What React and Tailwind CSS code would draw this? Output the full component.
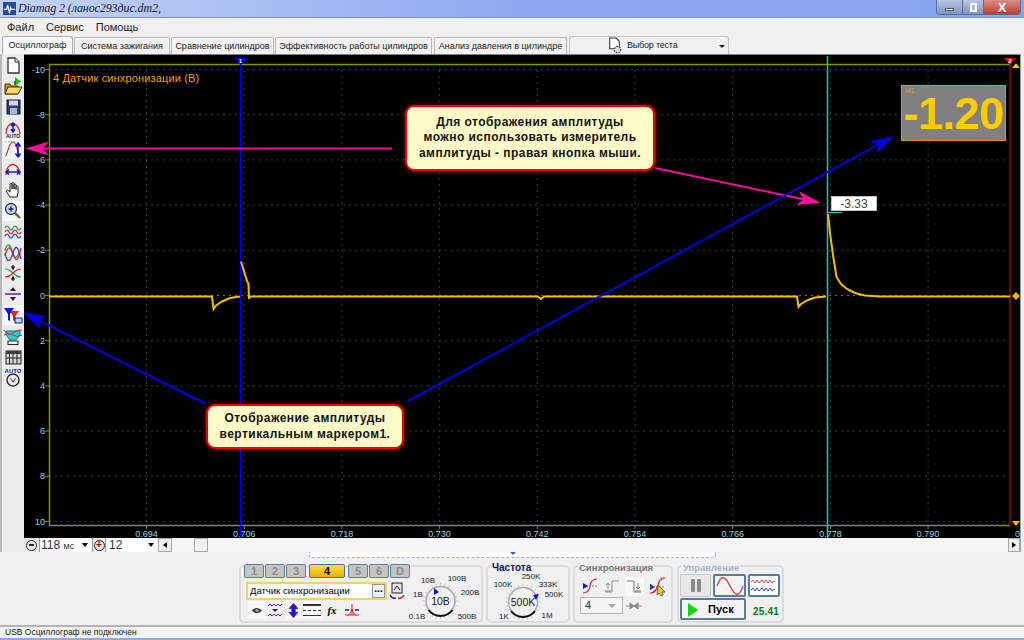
const sans = "font-['Liberation_Sans',Arial,sans-serif]"

const tabs = [
  ['Система зажигания', 'w-[96px]'],
  ['Сравнение цилиндров', 'w-[103px]'],
  ['Эффективность работы цилиндров', 'w-[157px]'],
  ['Анализ давления в цилиндре', 'w-[133px] ml-[2px]'],
]

const yLabels = [-10, -8, -6, -4, -2, 0, 2, 4, 6, 8, 10]
const xLabels = ['0.694', '0.706', '0.718', '0.730', '0.742', '0.754', '0.766', '0.778', '0.790']

function yPos(v) {
  return 295.5 + v * 22.6
}

function xPos(i) {
  return 146.5 + i * 97.7
}

// straight arrow with a barbed head
function Arrow({ from, to, color, width = 2 }) {
  const dx = to[0] - from[0]
  const dy = to[1] - from[1]
  const len = Math.hypot(dx, dy)
  const ux = dx / len
  const uy = dy / len
  const back = (d, s) => `${to[0] - ux * d - uy * s},${to[1] - uy * d + ux * s}`
  return (
    <g>
      <line x1={from[0]} y1={from[1]} x2={to[0] - ux * 12} y2={to[1] - uy * 12} stroke={color} strokeWidth={width} />
      <polygon points={`${to[0]},${to[1]} ${back(24, 7)} ${back(18, 0)} ${back(24, -7)}`} fill={color} />
    </g>
  )
}

function Scope() {
  return (
    <svg viewBox="24 55 996 483" className="absolute inset-0 w-full h-full">
      <rect x="24" y="55" width="996" height="483" fill="#000" />
      {yLabels.map(v => (
        <g key={v}>
          <line x1="49" x2="1010" y1={yPos(v)} y2={yPos(v)} stroke={v === 0 ? '#8a7a10' : '#3d3d3d'} strokeDasharray="2 4" />
          <line x1="45" x2="49" y1={yPos(v)} y2={yPos(v)} stroke="#6f8f00" />
          <text x="45" y={yPos(v) + 3} textAnchor="end" fontSize="9" fill="#8fd6e6" fontFamily="Liberation Sans">{v}</text>
        </g>
      ))}
      {xLabels.map((l, i) => (
        <g key={l}>
          <line x1={xPos(i)} x2={xPos(i)} y1="64" y2="526" stroke="#3d3d3d" strokeDasharray="2 4" />
          <line x1={xPos(i)} x2={xPos(i)} y1="526" y2="529" stroke="#777" />
          <text x={xPos(i)} y="537" textAnchor="middle" fontSize="9" fill="#8fd6e6" fontFamily="Liberation Sans">{l}</text>
        </g>
      ))}
      <text x="1015" y="537" fontSize="9" fill="#8fd6e6" fontFamily="Liberation Sans">0</text>
      <path d="M49.5 526V64.5H1010M49 525.5H1010" fill="none" stroke="#789a00" strokeWidth="1.5" />

      <line x1="240.5" x2="240.5" y1="58" y2="538" stroke="#0000f0" strokeWidth="1.5" />
      <polygon points="234,58 247,58 240.5,65" fill="#0000f0" />
      <text x="240.5" y="62.5" textAnchor="middle" fontSize="6" fontWeight="700" fill="#fff" fontFamily="Liberation Sans">1</text>
      <line x1="827.5" x2="827.5" y1="56" y2="538" stroke="#18c8c8" strokeWidth="1.5" />
      <path d="M827.5 228V212.5H842" fill="none" stroke="#18d0d0" />
      <line x1="1010" x2="1010" y1="60" y2="526" stroke="#a00000" strokeWidth="1.5" />
      <polygon points="1004,58 1016,58 1010,65" fill="#f00000" />
      <text x="1010" y="62.5" textAnchor="middle" fontSize="6" fontWeight="700" fill="#fff" fontFamily="Liberation Sans">2</text>
      <polygon points="1016,63 1020,68 1012,68" fill="#f0c000" />
      <polygon points="1012,521 1020,521 1016,526" fill="#f0c000" />
      <polygon points="1016,292 1020,296 1016,300 1012,296" fill="#f0b000" />

      <path
        d="M49 296.5H212L213.5 309L216 305.5L222 301.5L230 298L240 296.5M241 261.5L243 268L247 281L248.5 284L249 299L250 296.5H538L541 299L544 296.5H797L798.5 307L801 304L808 300L815 297.5L826 296.5M828 214L830 233L833 255L836.5 277L841 284L847 289L855 293L865 295.5L880 296.5H1010"
        fill="none"
        stroke="#f0c000"
        strokeWidth="2"
      />

      <Arrow from={[392, 148.5]} to={[25, 148.5]} color="#f0109a" />
      <Arrow from={[655, 168]} to={[821, 203]} color="#f0109a" />
      <Arrow from={[408, 401]} to={[894, 136]} color="#0000e0" />
      <Arrow from={[206, 404]} to={[22, 312]} color="#0000e0" />
    </svg>
  )
}

function Callout({ className, children }) {
  return (
    <div className={`absolute bg-[#fdfcc8] border-2 border-[#f00000] rounded-[9px] shadow-[0_0_5px_#a00000] flex items-center justify-center text-center font-bold text-[12px] leading-[15.5px] tracking-[0.45px] text-[#111] ${className}`}>
      <div>{children}</div>
    </div>
  )
}

function DocIcon() {
  return (
    <svg viewBox="0 0 20 20" className="w-5 h-5">
      <path d="M5 3h7l4 4v11H5z" fill="#fff" stroke="#333" strokeWidth="1.3" />
      <path d="M12 3v4h4" fill="#e8e8e8" stroke="#333" />
    </svg>
  )
}

function OpenIcon() {
  return (
    <svg viewBox="0 0 20 20" className="w-5 h-5">
      <path d="M2 8h5l1 2h7v8H2z" fill="#c89018" stroke="#4a3408" />
      <path d="M2 18l3-7h14l-4 7z" fill="#f8d868" stroke="#4a3408" />
      <path d="M12 1l6 4.5L12 10z" fill="#20c020" />
      <path d="M12 5v4" stroke="#107010" strokeWidth="1.5" />
    </svg>
  )
}

function SaveIcon() {
  return (
    <svg viewBox="0 0 20 20" className="w-5 h-5">
      <rect x="4" y="3" width="13" height="14" fill="#2c3e6e" stroke="#101830" />
      <rect x="6" y="3.5" width="9" height="5" fill="#d0d8e8" />
      <rect x="7" y="11" width="7" height="6" fill="#b0b8c8" />
    </svg>
  )
}

function EnvIcon({ variant }) {
  return (
    <svg viewBox="0 0 20 20" className="w-5 h-5">
      {variant === 'vert' ? (
        <>
          <path d="M2 17C5 17 5 3 10 3s4 14 7 14" fill="none" stroke="#e02020" strokeWidth="1.2" />
          <path d="M2 3h12" stroke="#909090" strokeDasharray="1.5 1.5" />
          <path d="M15 5v12M12.5 7.5L15 4l2.5 3.5M12.5 14.5L15 18l2.5-3.5" fill="none" stroke="#1010d0" strokeWidth="1.5" />
        </>
      ) : (
        <path d="M3 16C3 2 16 2 17 16" fill="none" stroke="#e02020" strokeWidth="1.3" />
      )}
      {variant === 'auto' && (
        <>
          <path d="M10 6v7M8 8l2-3 2 3M8 11l2 3 2-3" fill="none" stroke="#1010d0" strokeWidth="1.4" />
          <text x="10" y="20" textAnchor="middle" fontSize="5" fontWeight="700" fill="#222" fontFamily="Liberation Sans">AUTO</text>
        </>
      )}
      {variant === 'horiz' && (
        <path d="M3 13h14M6 10.5L3 13l3 2.5M14 10.5l3 2.5-3 2.5" fill="none" stroke="#1010e0" strokeWidth="1.6" />
      )}
    </svg>
  )
}

function HandIcon() {
  return (
    <svg viewBox="0 0 20 20" className="w-5 h-5">
      <path d="M7 17L3 11l1.5-1L7 12V4.5a1 1 0 012 0V9V3.5a1 1 0 012 0V9V5a1 1 0 012 0v4.5V7a1 1 0 012 0v6l-1 4z" fill="#fff" stroke="#222" strokeWidth="1" />
    </svg>
  )
}

function ZoomIcon() {
  return (
    <svg viewBox="0 0 20 20" className="w-5 h-5">
      <circle cx="8" cy="8" r="5.5" fill="#c8d8f0" stroke="#334" strokeWidth="1.3" />
      <path d="M5.5 8h5M8 5.5v5" stroke="#1020a0" strokeWidth="1.5" />
      <path d="M12 12l5 5" stroke="#806020" strokeWidth="2.4" />
    </svg>
  )
}

function WavesIcon({ kind }) {
  if (kind === 'flat') {
    return (
      <svg viewBox="0 0 20 20" className="w-5 h-5" fill="none" strokeWidth="1.2">
        <path d="M2 6q2-4 4 0t4 0 4 0 4 0" stroke="#20a040" />
        <path d="M2 10q2-4 4 0t4 0 4 0 4 0" stroke="#e02020" />
        <path d="M2 14q2-4 4 0t4 0 4 0 4 0" stroke="#2040e0" />
      </svg>
    )
  }
  if (kind === 'tall') {
    return (
      <svg viewBox="0 0 20 20" className="w-5 h-5" fill="none" strokeWidth="1.3">
        <path d="M2 8C4-1 7 1 9 8s4 9 7 2" stroke="#20a040" />
        <path d="M2 13C5 2 7 3 10 11s5 8 8-6" stroke="#e02020" />
        <path d="M2 10C4 20 7 20 10 10s5-6 8 6" stroke="#2040e0" />
      </svg>
    )
  }
  return (
    <svg viewBox="0 0 20 20" className="w-5 h-5" fill="none" strokeWidth="1.2">
      <path d="M2 6q4 0 8 4t8 4" stroke="#20a040" />
      <path d="M2 14q4 0 8-4t8-4" stroke="#e02020" />
      <path d="M10 2v3M8.5 3.5L10 6l1.5-2.5M10 18v-3M8.5 16.5L10 14l1.5 2.5" stroke="#111" />
    </svg>
  )
}

function SplitIcon() {
  return (
    <svg viewBox="0 0 20 20" className="w-5 h-5">
      <path d="M2 10h16" stroke="#7a2a9a" strokeWidth="1.6" />
      <path d="M10 3l3 4H7zM10 17l-3-4h6z" fill="#222" />
    </svg>
  )
}

function FilterIcon() {
  return (
    <svg viewBox="0 0 20 20" className="w-5 h-5">
      <path d="M1 3h10L7 9v7l-2-1V9z" fill="#1010e0" />
      <path d="M7 6h9l-3.5 5v6L10 15v-4z" fill="#e02020" />
      <rect x="12" y="13" width="7" height="5" fill="#c0d0f0" stroke="#1020a0" />
    </svg>
  )
}

function FillIcon() {
  return (
    <svg viewBox="0 0 20 20" className="w-5 h-5">
      <path d="M3 5h14v4l-4 5H7L3 9z" fill="#20d8c8" stroke="#108080" />
      <path d="M1 4q5 7 9 3t9-3M1 9q5-3 9 0t9 0" fill="none" stroke="#e02060" />
      <rect x="5" y="15" width="10" height="3.5" fill="#fff" stroke="#223" />
    </svg>
  )
}

function TableIcon() {
  return (
    <svg viewBox="0 0 20 20" className="w-5 h-5">
      <rect x="3" y="4" width="15" height="13" fill="#d8d8d8" stroke="#222" />
      <rect x="3" y="4" width="15" height="3" fill="#444" />
      <path d="M6.5 4v13M10 4v13M14 4v13M3 11h15" stroke="#222" />
    </svg>
  )
}

function AutoKnobIcon() {
  return (
    <svg viewBox="0 0 20 20" className="w-5 h-5">
      <text x="10" y="6" textAnchor="middle" fontSize="6" fontWeight="700" fill="#1020a0" fontFamily="Liberation Sans">AUTO</text>
      <circle cx="10" cy="13" r="6" fill="#e8e8e8" stroke="#333" strokeWidth="1.5" />
      <path d="M7.5 11.5L10 15l2.5-3.5" fill="none" stroke="#335" />
    </svg>
  )
}

const tools = [
  [<DocIcon />],
  [<OpenIcon />],
  [<SaveIcon />],
  [<EnvIcon variant="auto" />],
  [<EnvIcon variant="vert" />, true],
  [<EnvIcon variant="horiz" />],
  [<HandIcon />],
  [<ZoomIcon />, true],
  [<WavesIcon kind="flat" />],
  [<WavesIcon kind="tall" />],
  [<WavesIcon kind="cross" />],
  [<SplitIcon />],
  [<FilterIcon />, true],
  [<FillIcon />],
  [<TableIcon />],
  [<AutoKnobIcon />],
]

function Knob({ cx, cy, center, labels, pointer }) {
  const ticks = []
  for (let a = 0; a < 360; a += 15) {
    const r = (a * Math.PI) / 180
    ticks.push(
      <line
        key={a}
        x1={cx + Math.cos(r) * 15}
        y1={cy + Math.sin(r) * 15}
        x2={cx + Math.cos(r) * 18}
        y2={cy + Math.sin(r) * 18}
        stroke="#c8c8c8"
      />
    )
  }
  return (
    <g fontFamily="Liberation Sans" fontSize="8" fill="#222">
      {ticks}
      <circle cx={cx} cy={cy} r="14.5" fill="#f2f2f2" stroke="#a8a8a8" strokeWidth="1.5" />
      <path
        d={`M${cx - 12} ${cy + 9}A15 15 0 0 0 ${cx + 12} ${cy + 9}`}
        fill="none"
        stroke="#111"
        strokeWidth="2"
      />
      <polygon points={pointer} fill="#1010d0" />
      <text x={cx} y={cy + 4} textAnchor="middle" fontSize="10.5">{center}</text>
      {labels.map(l => (
        <text key={l[0]} x={l[1]} y={l[2]} textAnchor="middle">{l[0]}</text>
      ))}
    </g>
  )
}

function GroupBox({ className, title, titleClass, children }) {
  return (
    <div className={`relative h-[58px] border-2 border-[#dcdcdc] rounded-[5px] ${className}`}>
      {title && (
        <span className={`absolute -top-[5px] left-[3px] px-[1px] bg-[#f0f0f0] leading-[11px] font-bold ${titleClass}`}>
          {title}
        </span>
      )}
      {children}
    </div>
  )
}

function ChannelButton({ label, active }) {
  if (active) {
    return (
      <div className="w-[36px] h-[14px] bg-linear-to-b from-[#ffdc40] to-[#e8b000] border border-[#50708c] rounded-[2px] flex items-center justify-center text-[11px] font-bold leading-none">
        {label}
      </div>
    )
  }
  return (
    <div className="w-[20px] h-[14px] bg-[#c4c4c4] border border-[#5f7f9a] rounded-[2px] flex items-center justify-center text-[11px] font-bold leading-none text-[#8c8c8c]">
      {label}
    </div>
  )
}

export default function App() {
  return (
    <div className={`w-[1024px] h-[640px] overflow-hidden flex flex-col bg-[#f0f0f0] text-black ${sans}`}>
      {/* title bar */}
      <div className="h-[18px] flex items-start bg-linear-to-r from-[#c4d3f6] via-[#8fa9f0] to-[#86a4ec] border-b border-[#7f93c4]">
        <svg viewBox="0 0 14 14" className="w-[13px] h-[13px] ml-[3px] mt-[2px]">
          <rect width="14" height="14" fill="#1f4f96" />
          <path d="M1 8h3l1-5 2 9 1-6 1 2h4" fill="none" stroke="#fff" strokeWidth="1.2" />
        </svg>
        <span className="ml-[2px] mt-[1px] font-['Liberation_Serif',serif] italic text-[12px] leading-[15px] tracking-[-0.1px] text-[#1a1a2a]">
          Diamag 2 (ланос293дис.dm2,
        </span>
        <div className="ml-auto mr-[3px] flex h-[15px] border border-t-0 border-[#5a6c96] rounded-b-[4px] overflow-hidden">
          <div className="w-[25px] bg-linear-to-b from-[#b8c6e4] to-[#8096c4] flex items-center justify-center">
            <div className="w-[9px] h-[3px] mt-[4px] bg-white border border-[#556]" />
          </div>
          <div className="w-[21px] bg-linear-to-b from-[#b8c6e4] to-[#8096c4] border-l border-[#5a6c96] flex items-center justify-center">
            <div className="w-[7px] h-[9px] bg-[#a8b8d8] border-2 border-white" />
          </div>
          <div className="w-[37px] bg-linear-to-b from-[#d89088] to-[#b83a30] border-l border-[#5a6c96] flex items-center justify-center text-white text-[13px] font-bold leading-none">
            X
          </div>
        </div>
      </div>

      {/* menu */}
      <div className="h-[18px] flex items-center pl-[7px] gap-[12px] text-[11px] text-[#222]">
        <span>Файл</span>
        <span>Сервис</span>
        <span>Помощь</span>
      </div>

      {/* tabs */}
      <div className="h-[18px] flex items-end pl-[2px] text-[9px] leading-none whitespace-nowrap text-[#222]">
        <div className="w-[71px] h-[18px] bg-[#f8f8f8] border border-b-0 border-[#b0b0b0] rounded-t-[3px] flex items-center justify-center">
          Осциллограф
        </div>
        {tabs.map(t => (
          <div key={t[0]} className={`h-[17px] ${t[1]} bg-[#f2f2f2] border border-b-0 border-[#b8b8b8] rounded-t-[2px] ml-[1px] flex items-center justify-center`}>
            {t[0]}
          </div>
        ))}
        <div className="relative w-[160px] h-[18px] ml-[2px] border border-b-0 border-[#c4c4c4] rounded-t-[3px] flex items-center pl-[37px]">
          <svg viewBox="0 0 14 16" className="w-[16px] h-[17px] mr-[4px]">
            <path d="M2 1h6l3 3v7H2z" fill="#fff" stroke="#333" />
            <circle cx="9.5" cy="12" r="3" fill="#ddd" stroke="#333" strokeDasharray="1.5 1" />
          </svg>
          <span className="tracking-[-0.2px]">Выбор теста</span>
          <div className="absolute right-[3px] top-[8px] border-x-[3px] border-t-[3px] border-x-transparent border-t-[#222]" />
        </div>
      </div>

      {/* main area */}
      <div className="h-[498px] flex">
        <div className="w-[24px] flex flex-col items-center pt-[1px] border-l-2 border-[#b8b8b8] bg-[#ececec]">
          {tools.map((t, i) => (
            <div key={i} className={`w-[20px] h-[20.8px] shrink-0 flex items-center justify-center ${t[1] ? 'bg-[#f8f8f8]' : ''}`}>
              {t[0]}
            </div>
          ))}
        </div>
        <div className="w-[996px] flex flex-col">
          <div className="relative h-[484px] border-t border-[#808080]">
            <Scope />
            <div className="absolute left-[29px] top-[16px] text-[11px] leading-[14px] tracking-[0.15px] text-[#f0a000]">
              4 Датчик синхронизации (В)
            </div>
            <Callout className="left-[381px] top-[50px] w-[250px] h-[66px]">
              Для отображения амплитуды<br />можно использовать измеритель<br />амплитуды - правая кнопка мыши.
            </Callout>
            <Callout className="left-[182px] top-[349px] w-[198px] h-[45px]">
              Отображение амплитуды<br />вертикальным маркером1.
            </Callout>
            <div className="absolute left-[877px] top-[30px] w-[105px] h-[56px] bg-[#808080] border border-[#d0a000] text-[#ffcc00] font-bold">
              <span className="absolute left-[3px] top-0 text-[7px] leading-[9px] text-[#d0a830] font-normal">M1</span>
              <span className="absolute left-0 right-0 top-[10px] text-center text-[45px] leading-[36px] tracking-[-0.5px]">-1.20</span>
            </div>
            <div className="absolute left-[807px] top-[141px] w-[46px] h-[15px] bg-white border border-[#c0c0c0] flex items-center justify-center text-[12px] text-[#444]">
              -3.33
            </div>
          </div>

          {/* scale and scroll row */}
          <div className="h-[14px] flex items-center text-[12px] text-[#333] leading-none">
            <div className="w-[82px] h-full bg-white flex items-center">
              <div className="w-[16px] h-[14px] bg-[#e8e8e8] border-r border-[#999] flex items-center justify-center">
                <div className="w-[11px] h-[11px] rounded-full border-[1.5px] border-[#222] flex items-center justify-center">
                  <div className="w-[5px] h-[1.5px] bg-[#222]" />
                </div>
              </div>
              <span className="ml-[1px]">118 <span className="text-[9px]">мс</span></span>
              <div className="ml-auto mr-[4px] border-x-[3.5px] border-t-[4px] border-x-transparent border-t-black" />
              <div className="w-[14px] h-[14px] bg-[#e8e8e8] border-x border-[#999] flex items-center justify-center">
                <div className="w-[11px] h-[11px] rounded-full border-[1.5px] border-[#222] flex items-center justify-center text-[#b00000] text-[10px] font-bold leading-none">+</div>
              </div>
            </div>
            <div className="w-[52px] h-full bg-white flex items-center pl-[3px]">
              <span>12</span>
              <div className="ml-auto mr-[4px] border-x-[3.5px] border-t-[4px] border-x-transparent border-t-black" />
            </div>
            <div className="flex-1 h-full flex items-center bg-[#f6f6f6]">
              <div className="w-[14px] h-[14px] bg-[#f0f0f0] border border-[#a8a8a8] flex items-center justify-center">
                <div className="border-y-[3.5px] border-r-[4px] border-y-transparent border-r-black" />
              </div>
              <div className="w-[14px] h-[14px] ml-[22px] bg-[#f0f0f0] border border-[#a8a8a8]" />
              <div className="w-[12px] h-[14px] ml-auto bg-[#f0f0f0] border border-[#a8a8a8] flex items-center justify-center">
                <div className="border-y-[3.5px] border-l-[4px] border-y-transparent border-l-black" />
              </div>
            </div>
          </div>
        </div>
        <div className="flex-1 border-l border-[#a0a0a0]" />
      </div>

      {/* bottom panel */}
      <div className="relative h-[73px] flex flex-col">
        <div className="ml-[309px] w-[407px] h-[6px] bg-white border border-t-0 border-[#9ab0d0] border-dashed rounded-b-[2px] flex justify-center">
          <div className="border-x-[3px] border-t-[3px] border-x-transparent border-t-[#3060c0]" />
        </div>
        <div className="ml-[239px] mt-[7px] flex gap-[3px]">
          <GroupBox className="w-[244px]">
            <div className="flex gap-[1px] -mt-[3px] ml-[3px]">
              <ChannelButton label="1" />
              <ChannelButton label="2" />
              <ChannelButton label="3" />
              <div className="w-[1px]" />
              <ChannelButton label="4" active />
              <div className="w-[1px]" />
              <ChannelButton label="5" />
              <ChannelButton label="6" />
              <ChannelButton label="D" />
            </div>
            <div className="flex items-center mt-[4px] ml-[5px]">
              <div className="w-[141px] h-[18px] bg-white border-2 border-[#f0d070] flex items-center pl-[2px] text-[9.5px] leading-none">
                <span>Датчик синхронизации</span>
                <div className="ml-auto w-[13px] h-[14px] bg-[#f0f0f0] border border-[#999] flex items-start justify-center text-[10px] leading-[7px] font-bold">
                  ...
                </div>
              </div>
              <svg viewBox="0 0 16 18" className="ml-[2px] w-[16px] h-[18px]">
                <rect x="3" y="1" width="10" height="10" fill="#e8e8e8" stroke="#223" />
                <path d="M5 8l3-4 3 4" stroke="#223" fill="none" />
                <path d="M1 13q2 4 6 3" stroke="#1020c0" strokeWidth="1.5" fill="none" />
                <path d="M15 13q-2 4-6 3" stroke="#d02020" strokeWidth="1.5" fill="none" />
              </svg>
            </div>
            <div className="flex items-center mt-[1px] ml-[7px] gap-[1px]">
              <div className="w-[17px] h-[18px] bg-[#f8f8f8] flex items-center justify-center">
                <svg viewBox="0 0 14 10" className="w-[12px] h-[9px]"><path d="M1 5q6-6 12 0-6 6-12 0z" fill="#333" /><circle cx="7" cy="5" r="2" fill="#999" /></svg>
              </div>
              <svg viewBox="0 0 16 16" className="w-[16px] h-[16px] mx-[1px]" fill="none" strokeWidth="1">
                <path d="M1 4l2-2 2 2 2-2 2 2 2-2 2 2 2-2" stroke="#8020a0" />
                <path d="M1 14l2-2 2 2 2-2 2 2 2-2 2 2 2-2" stroke="#8020a0" />
                <path d="M5 7h6l-3 3z" fill="#222" />
              </svg>
              <div className="w-[15px] h-[18px] ml-[1px] bg-[#f8f8f8] flex items-center justify-center">
                <svg viewBox="0 0 12 18" className="w-[11px] h-[17px]"><path d="M6 1l5 6H8v4h3l-5 6-5-6h3V7H1z" fill="#1818d8" stroke="#800080" strokeWidth="0.6" /></svg>
              </div>
              <div className="w-[18px] h-[18px] ml-[1px] bg-[#f8f8f8] flex flex-col justify-center gap-[4px]">
                <div className="h-[1.5px] bg-[#333]" />
                <div className="h-[1px] border-t border-dashed border-[#333]" />
                <div className="h-[1.5px] bg-[#333]" />
              </div>
              <span className="w-[18px] ml-[1px] text-center font-['Liberation_Serif',serif] italic font-bold text-[11px] leading-none">fx</span>
              <svg viewBox="0 0 16 14" className="w-[16px] h-[14px] ml-[2px]">
                <path d="M8 1v11M1 12h14M4 12q3-1 4-6 1 5 4 6" fill="none" stroke="#e02020" />
                <path d="M1 7h4M15 7h-4" stroke="#1020c0" strokeWidth="1.5" />
              </svg>
            </div>
            <svg viewBox="407 571 74 50" className="absolute left-[166px] top-[4px] w-[74px] h-[50px]">
              <Knob
                cx={440.5}
                cy={601}
                center="10В"
                pointer="434,588 434,595 439,592"
                labels={[
                  ['10В', 428, 583],
                  ['100В', 457, 581],
                  ['1В', 418, 597],
                  ['200В', 470, 595],
                  ['0.1В', 417, 619],
                  ['500В', 467, 619],
                ]}
              />
            </svg>
          </GroupBox>
          <GroupBox className="w-[84px]" title="Частота" titleClass="text-[10px] text-[#10106a]">
            <svg viewBox="487 571 82 50" className="absolute left-0 top-[4px] w-[82px] h-[50px]">
              <Knob
                cx={522}
                cy={602}
                center="500K"
                pointer="532,595 538,594 535,600"
                labels={[
                  ['100K', 502, 587],
                  ['250K', 530, 579],
                  ['333K', 547, 587],
                  ['500K', 553, 597],
                  ['1K', 503, 619],
                  ['1M', 546, 618],
                ]}
              />
            </svg>
          </GroupBox>
          <GroupBox className="w-[100px]" title="Синхронизация" titleClass="text-[9.5px] text-[#777]">
            <div className="flex items-center mt-[9px] ml-[6px] gap-[4px]">
              <svg viewBox="0 0 18 18" className="w-[18px] h-[18px]">
                <path d="M2 16q6 0 7-7t7-7" fill="none" stroke="#e02020" strokeWidth="1.2" />
                <path d="M2 9h14" stroke="#6080c0" strokeDasharray="2 1" />
                <path d="M2 6l5 3-5 3z" fill="#1010d0" />
              </svg>
              <svg viewBox="0 0 18 18" className="w-[18px] h-[18px]" fill="none" stroke="#8a8a8a">
                <path d="M2 15h7V4h7" />
                <path d="M5 12V6M3 8l2-2 2 2M2 14h6" />
              </svg>
              <div className="w-[19px] h-[19px] bg-[#f8f8f8]">
                <svg viewBox="0 0 18 18" className="w-[18px] h-[18px]" fill="none" stroke="#777">
                  <path d="M2 4h7v11h7" />
                  <path d="M13 6v6M11 10l2 2 2-2M10 14h6" />
                </svg>
              </div>
              <svg viewBox="0 0 20 20" className="w-[20px] h-[20px]">
                <path d="M2 17q6 0 8-8t7-7" fill="none" stroke="#e02020" strokeWidth="1.2" />
                <path d="M2 8l5 3-5 3z" fill="#1010d0" />
                <path d="M2 11h14" stroke="#6080c0" strokeDasharray="2 1" />
                <path d="M10 9l7 7-3 0 1 3-2 1-2-3-2 2z" fill="#f0d020" stroke="#333" strokeWidth="0.7" />
              </svg>
            </div>
            <div className="flex items-center mt-[1px] ml-[5px]">
              <div className="relative w-[43px] h-[17px] bg-[#f4f4f4] border border-[#b4b4b4] text-[11px] leading-[15px] pl-[4px] text-[#333]">
                4
                <div className="absolute right-[6px] top-[6px] border-x-[4px] border-t-[4px] border-x-transparent border-t-[#aaa]" />
              </div>
              <svg viewBox="0 0 16 8" className="ml-[3px] w-[16px] h-[8px]">
                <path d="M0 4h5M16 4h-5M4 1l4 3-4 3zM12 1L8 4l4 3z" fill="#888" stroke="#888" />
              </svg>
            </div>
          </GroupBox>
          <GroupBox className="w-[107px] ml-[1px]" title="Управление" titleClass="text-[9.5px] text-[#a0b4cc]">
            <div className="flex mt-[7px] ml-[1px] gap-[2px]">
              <div className="w-[31px] h-[23px] bg-[#e8e8e8] border border-[#c8c8c8] rounded-[2px] flex items-center justify-center gap-[2px]">
                <div className="w-[4px] h-[13px] bg-[#8a8a8a] rounded-[1px]" />
                <div className="w-[4px] h-[13px] bg-[#8a8a8a] rounded-[1px]" />
              </div>
              <div className="w-[33px] h-[23px] bg-[#f4f4f4] border-2 border-[#5a7c9c] rounded-[2px] flex items-center justify-center">
                <svg viewBox="0 0 28 18" className="w-[28px] h-[18px]">
                  <path d="M1 9C5-3 9-1 14 9s9 12 13 0" fill="none" stroke="#e04040" strokeWidth="1.3" />
                </svg>
              </div>
              <div className="w-[32px] h-[23px] bg-white border-2 border-[#5a7c9c] rounded-[2px]">
                <svg viewBox="0 0 28 19" className="w-[28px] h-[19px]" fill="none" strokeWidth="1">
                  <path d="M1 6l2-2 2 3 2-3 2 3 3-3 2 3 2-3 2 3 2-3 2 3 3-2" stroke="#e04040" />
                  <path d="M1 14l2-2 2 3 2-3 2 3 3-3 2 3 2-3 2 3 2-3 2 3 3-2" stroke="#3040d0" />
                </svg>
              </div>
            </div>
            <div className="flex items-center mt-[1px] ml-[1px]">
              <div className="relative w-[66px] h-[22px] bg-[#f4f4f4] border-2 border-[#5a7c9c] rounded-[2px] flex items-center justify-center pl-[16px] text-[11px] font-bold tracking-[0.2px]">
                <div className="absolute left-[6px] top-[3px] border-y-[7px] border-l-[10px] border-y-transparent border-l-[#10d810]" />
                Пуск
              </div>
              <span className="ml-[7px] mt-[6px] text-[10px] font-bold leading-none tracking-[0.2px] text-[#0a7a10]">25.41</span>
            </div>
          </GroupBox>
        </div>
      </div>

      {/* status bar */}
      <div className="relative h-[15px] border-t-2 border-[#b4b4b4] bg-[#f4f4f4] text-[8.5px] leading-[11px] pl-[5px] text-[#222]">
        USB Осциллограф не подключен
        <div className="absolute left-0 right-0 bottom-0 h-[2px] bg-[#8fa9e8]" />
      </div>
    </div>
  )
}
